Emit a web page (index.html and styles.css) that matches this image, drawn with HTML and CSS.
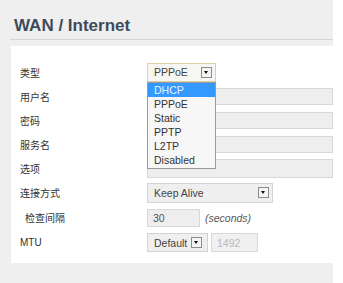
FILE: index.html
```html
<!DOCTYPE html>
<html lang="zh">
<head>
  <meta charset="UTF-8" />
  <meta name="viewport" content="width=device-width, initial-scale=1.0"/>
  <title>WAN / Internet</title>
  <link rel="stylesheet" href="styles.css">
</head>
<body>

  <div class="page">
    <h2>WAN / Internet</h2>

    <div class="panel">
      <div class="row">
        <label>类型</label>
        <div class="select-wrap">
          <div class="select focus type-select">
            <span>PPPoE</span>
            <i class="arrow"></i>
          </div>
          <ul class="dropdown">
            <li class="active">DHCP</li>
            <li>PPPoE</li>
            <li>Static</li>
            <li>PPTP</li>
            <li>L2TP</li>
            <li>Disabled</li>
          </ul>
        </div>
      </div>

      <div class="row">
        <label>用户名</label>
        <input type="text" class="wide">
      </div>
      <div class="row">
        <label>密码</label>
        <input type="text" class="wide">
      </div>
      <div class="row">
        <label>服务名</label>
        <input type="text" class="wide">
      </div>
      <div class="row">
        <label>选项</label>
        <input type="text" class="wide tall">
      </div>

      <div class="row big">
        <label>连接方式</label>
        <div class="select keep-select">
          <span>Keep Alive</span>
          <i class="arrow"></i>
        </div>
      </div>

      <div class="row big">
        <label class="sub">检查间隔</label>
        <input type="text" class="short" value="30">
        <em class="unit">(seconds)</em>
      </div>

      <div class="row big">
        <label>MTU</label>
        <div class="select mtu-select">
          <span>Default</span>
          <i class="arrow"></i>
        </div>
        <input type="text" class="mtu" value="1492" disabled>
      </div>
    </div>
  </div>

</body>
</html>
```

FILE: styles.css
```css
body {
  margin: 0;
  background: #fff;
  font-family: "Liberation Sans", "Noto Sans CJK SC", sans-serif;
}

.page {
  width: 323px;
  height: 283px;
  padding-left: 10px;
  background: #efefef;
  overflow: hidden;
}

h2 {
  margin: 0;
  padding: 16px 0 3px 4px;
  font-size: 17px;
  line-height: 20px;
  color: #3e4b5b;
  border-bottom: 1px solid #d4d4d4;
}

.panel {
  margin: 6px 0 0 1px;
  padding: 14px 0 8px 9px;
  background: #fff;
}

.row {
  display: flex;
  align-items: center;
  height: 24px;
}

.row.big {
  height: 25px;
}

.row label {
  width: 127px;
  flex: none;
  font-size: 10px;
  color: #333;
}

.row label.sub {
  padding-left: 5px;
  width: 122px;
}

input[type="text"] {
  box-sizing: border-box;
  height: 18px;
  margin: 0;
  padding: 0 5px;
  border: 1px solid #d8d8d8;
  background: #eee;
  font-family: inherit;
  font-size: 10.5px;
  color: #555;
  outline: none;
}

input.wide {
  width: 186px;
  height: 17px;
}

input.wide.tall {
  height: 19px;
}

input.short {
  width: 53px;
}

input.mtu {
  width: 47px;
  height: 19px;
  margin-left: 3px;
  color: #b8b8b8;
  background: #f0f0f0;
}

.unit {
  margin-left: 5px;
  font-size: 10.5px;
  color: #555;
}

.select-wrap {
  position: relative;
}

.select {
  box-sizing: border-box;
  display: flex;
  align-items: center;
  justify-content: space-between;
  height: 19px;
  padding: 0 3px 0 6px;
  border: 1px solid #d4d4d4;
  background: #efefef;
  font-size: 10.5px;
  color: #444;
}

.select.focus {
  border-color: #dfd1a6;
  background: #f6f6f2;
}

.type-select {
  width: 69px;
}

.keep-select {
  width: 126px;
  height: 20px;
}

.mtu-select {
  width: 61px;
  padding-right: 5px;
}

.arrow {
  box-sizing: border-box;
  position: relative;
  width: 11px;
  height: 11px;
  border: 1px solid #8c8c8c;
  background: #f4f4f4;
}

.arrow::after {
  content: "";
  position: absolute;
  left: 2px;
  top: 3px;
  border-left: 2.5px solid transparent;
  border-right: 2.5px solid transparent;
  border-top: 3px solid #111;
}

.dropdown {
  position: absolute;
  top: 19px;
  left: 0;
  width: 69px;
  box-sizing: border-box;
  margin: 0;
  padding: 0 0 1px;
  list-style: none;
  border: 1px solid #9a9a9a;
  background: #f7f7f7;
  z-index: 10;
}

.dropdown li {
  height: 14px;
  line-height: 14px;
  padding-left: 6px;
  font-size: 10.5px;
  color: #333;
}

.dropdown li.active {
  background: #3399ff;
  color: #e8f3ff;
}
```
